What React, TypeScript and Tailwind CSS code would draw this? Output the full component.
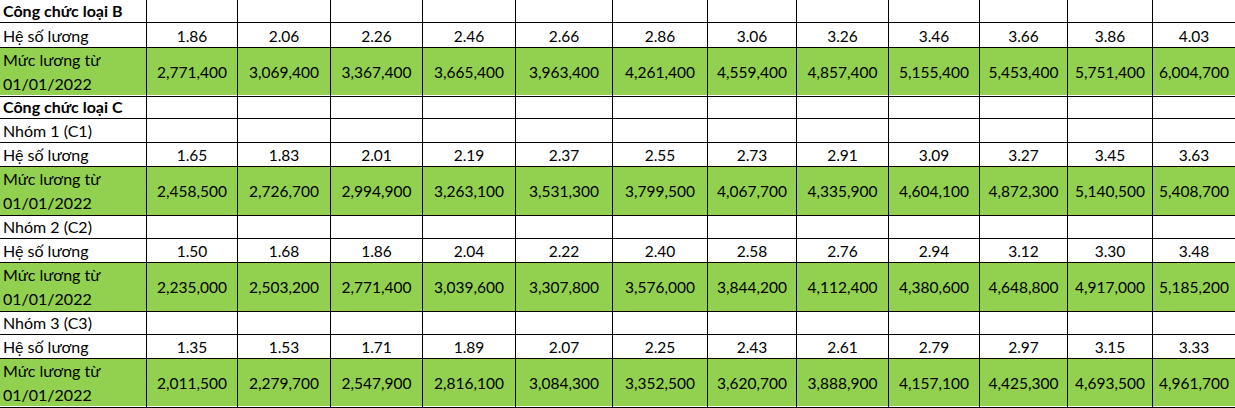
import React from "react";

type Row =
  | { kind: "title"; label: string; h: string }
  | { kind: "group"; label: string; h: string }
  | { kind: "coef"; values: string[]; h: string }
  | { kind: "salary"; values: string[]; h: string };

const rows: Row[] = [
  { kind: "title", label: "Công chức loại B", h: "h-[23px]" },
  {
    kind: "coef",
    h: "h-[25px]",
    values: ["1.86", "2.06", "2.26", "2.46", "2.66", "2.86", "3.06", "3.26", "3.46", "3.66", "3.86", "4.03"],
  },
  {
    kind: "salary",
    h: "h-[47px]",
    values: ["2,771,400", "3,069,400", "3,367,400", "3,665,400", "3,963,400", "4,261,400", "4,559,400", "4,857,400", "5,155,400", "5,453,400", "5,751,400", "6,004,700"],
  },
  { kind: "title", label: "Công chức loại C", h: "h-[24px]" },
  { kind: "group", label: "Nhóm 1 (C1)", h: "h-[24px]" },
  {
    kind: "coef",
    h: "h-[24px]",
    values: ["1.65", "1.83", "2.01", "2.19", "2.37", "2.55", "2.73", "2.91", "3.09", "3.27", "3.45", "3.63"],
  },
  {
    kind: "salary",
    h: "h-[48px]",
    values: ["2,458,500", "2,726,700", "2,994,900", "3,263,100", "3,531,300", "3,799,500", "4,067,700", "4,335,900", "4,604,100", "4,872,300", "5,140,500", "5,408,700"],
  },
  { kind: "group", label: "Nhóm 2 (C2)", h: "h-[24px]" },
  {
    kind: "coef",
    h: "h-[24px]",
    values: ["1.50", "1.68", "1.86", "2.04", "2.22", "2.40", "2.58", "2.76", "2.94", "3.12", "3.30", "3.48"],
  },
  {
    kind: "salary",
    h: "h-[48px]",
    values: ["2,235,000", "2,503,200", "2,771,400", "3,039,600", "3,307,800", "3,576,000", "3,844,200", "4,112,400", "4,380,600", "4,648,800", "4,917,000", "5,185,200"],
  },
  { kind: "group", label: "Nhóm 3 (C3)", h: "h-[24px]" },
  {
    kind: "coef",
    h: "h-[24px]",
    values: ["1.35", "1.53", "1.71", "1.89", "2.07", "2.25", "2.43", "2.61", "2.79", "2.97", "3.15", "3.33"],
  },
  {
    kind: "salary",
    h: "h-[47px]",
    values: ["2,011,500", "2,279,700", "2,547,900", "2,816,100", "3,084,300", "3,352,500", "3,620,700", "3,888,900", "4,157,100", "4,425,300", "4,693,500", "4,961,700"],
  },
];

// column widths measured from the sheet, each including its right border
const gridCols =
  "grid grid-cols-[147px_91px_93px_92px_93px_97px_95px_89px_92px_91px_88px_85px_1fr]";

function Cell({ last, className, children }: { last: boolean; className?: string; children?: React.ReactNode }) {
  return (
    <div className={`border-b border-black ${last ? "" : "border-r"} ${className ?? ""}`}>
      {children}
    </div>
  );
}

function SheetRow({ row }: { row: Row }) {
  const empty = Array.from({ length: 12 });

  if (row.kind === "title" || row.kind === "group") {
    return (
      <div className={`${gridCols} ${row.h}`}>
        <Cell last={false} className="flex items-end pl-[3px] pb-[1px] text-[16px]">
          <span className={row.kind === "title" ? "font-bold" : ""}>{row.label}</span>
        </Cell>
        {empty.map((_, i) => (
          <Cell key={i} last={i === 11} />
        ))}
      </div>
    );
  }

  if (row.kind === "coef") {
    return (
      <div className={`${gridCols} ${row.h}`}>
        <Cell last={false} className="flex items-end pl-[3px] pb-[1px] text-[16px]">
          Hệ số lương
        </Cell>
        {row.values.map((v, i) => (
          <Cell key={i} last={i === 11} className="flex items-end justify-center pb-[1px]">
            {v}
          </Cell>
        ))}
      </div>
    );
  }

  return (
    <div className={`${gridCols} ${row.h} bg-[#92d050]`}>
      <Cell last={false} className="flex flex-col justify-end pl-[3px] leading-[24px] text-[16px]">
        <span>Mức lương từ</span>
        <span>01/01/2022</span>
      </Cell>
      {row.values.map((v, i) => (
        <Cell key={i} last={i === 11} className="flex items-center justify-center">
          {v}
        </Cell>
      ))}
    </div>
  );
}

export default function App() {
  return (
    <div className="w-[1235px] h-[408px] overflow-hidden bg-white text-black text-[15.5px] leading-[20px] font-['Lato',sans-serif]">
      {rows.map((row, i) => (
        <SheetRow key={i} row={row} />
      ))}
    </div>
  );
}
